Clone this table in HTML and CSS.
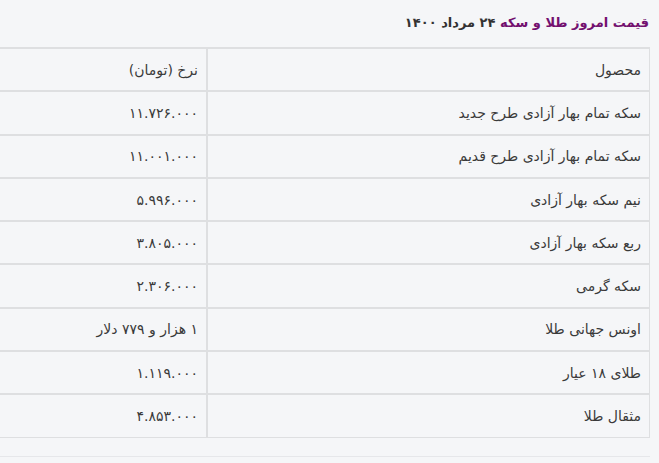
FILE: index.html
```html
<!DOCTYPE html>
<html lang="fa" dir="rtl">
<head>
<meta charset="utf-8">
<title>قیمت امروز طلا و سکه</title>
<link rel="stylesheet" href="styles.css">
</head>
<body>
<main class="page">
  <h2 class="title"><span class="title-main">قیمت امروز طلا و سکه</span> <span class="title-date">۲۴ مرداد ۱۴۰۰</span></h2>
  <table class="prices">
    <colgroup><col class="col-name"><col class="col-price"></colgroup>
    <tbody>
      <tr><td class="name">محصول</td><td class="price">نرخ (تومان)</td></tr>
      <tr><td class="name">سکه تمام بهار آزادی طرح جدید</td><td class="price">۱۱.۷۲۶.۰۰۰</td></tr>
      <tr><td class="name">سکه تمام بهار آزادی طرح قدیم</td><td class="price">۱۱.۰۰۱.۰۰۰</td></tr>
      <tr><td class="name">نیم سکه بهار آزادی</td><td class="price">۵.۹۹۶.۰۰۰</td></tr>
      <tr><td class="name">ربع سکه بهار آزادی</td><td class="price">۳.۸۰۵.۰۰۰</td></tr>
      <tr><td class="name">سکه گرمی</td><td class="price">۲.۳۰۶.۰۰۰</td></tr>
      <tr><td class="name">اونس جهانی طلا</td><td class="price">۱ هزار و ۷۷۹ دلار</td></tr>
      <tr><td class="name">طلای ۱۸ عیار</td><td class="price">۱.۱۱۹.۰۰۰</td></tr>
      <tr><td class="name">مثقال طلا</td><td class="price">۴.۸۵۳.۰۰۰</td></tr>
    </tbody>
  </table>
  <div class="next"></div>
</main>
</body>
</html>
```
FILE: styles.css
```css
html, body {
  margin: 0;
  padding: 0;
  background: #f5f6f8;
}
body {
  font-family: "DejaVu Sans", "Noto Sans", sans-serif;
  color: #3a3a3a;
  direction: rtl;
}
.page {
  width: 650px;
  margin-right: 9px;
  padding-top: 11px;
}
.title {
  margin: 0 1px 0 0;
  font-size: 13px;
  font-weight: bold;
  line-height: 24px;
  height: 36px;
  color: #333;
}
.title-main {
  color: #73106f;
}
.prices {
  width: 650px;
  table-layout: fixed;
  border-collapse: separate;
  border-spacing: 0;
  border-right: 1px solid #dedfe1;
  border-bottom: 1px solid #dedfe1;
  font-size: 14px;
}
.col-name {
  width: 441px;
}
.prices td {
  box-sizing: border-box;
  height: 43.3px;
  padding: 0 8px 0 8px;
  border-top: 2px solid #dedfe1;
  text-align: right;
  vertical-align: middle;
}
.prices .price {
  border-right: 2px solid #dedfe1;
}
.next {
  margin-top: 18px;
  border-top: 1px solid #e6e7ea;
  height: 10px;
}
```
